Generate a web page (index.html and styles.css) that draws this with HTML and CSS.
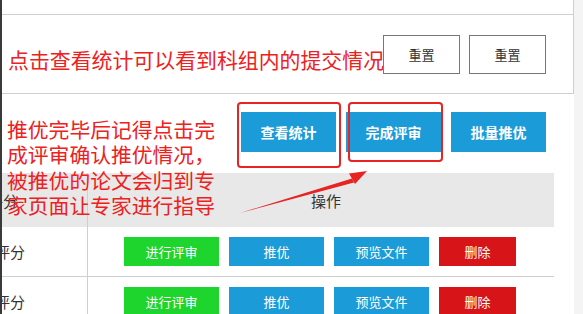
FILE: index.html
```html
<!DOCTYPE html>
<html lang="zh-CN">
<head>
    <meta charset="UTF-8">
    <title>评审管理</title>
    <link rel="stylesheet" href="styles.css">
</head>
<body>
    <div class="page">
        <div class="main">
            <div class="top-box"></div>
            <div class="search-panel">
                <button class="btn-plain">重置</button>
                <button class="btn-plain">重置</button>
            </div>
            <div class="toolbar">
                <button class="btn-blue btn-big">查看统计</button>
                <button class="btn-blue btn-big">完成评审</button>
                <button class="btn-blue btn-big">批量推优</button>
            </div>
            <div class="table">
                <div class="row head">
                    <div class="cell first"><span class="cut-head">评分</span></div>
                    <div class="cell ops">操作</div>
                </div>
                <div class="row">
                    <div class="cell first"><span class="cut">评分</span></div>
                    <div class="cell actions">
                        <button class="btn btn-green">进行评审</button>
                        <button class="btn btn-blue">推优</button>
                        <button class="btn btn-blue">预览文件</button>
                        <button class="btn btn-red">删除</button>
                    </div>
                </div>
                <div class="row">
                    <div class="cell first"><span class="cut">评分</span></div>
                    <div class="cell actions">
                        <button class="btn btn-green">进行评审</button>
                        <button class="btn btn-blue">推优</button>
                        <button class="btn btn-blue">预览文件</button>
                        <button class="btn btn-red">删除</button>
                    </div>
                </div>
            </div>
        </div>
        <div class="side"></div>

        <!-- annotations drawn over the screenshot -->
        <div class="note note-top">点击查看统计可以看到科组内的提交情况</div>
        <div class="note note-left">推优完毕后记得点击完<br>成评审确认推优情况，<br>被推优的论文会归到专<br>家页面让专家进行指导</div>
        <div class="mark mark-1"></div>
        <div class="mark mark-2"></div>
        <svg class="arrow" width="583" height="314" viewBox="0 0 583 314">
            <polygon points="240,213 352,178.5 354,182.5" fill="#e82323"/>
            <polygon points="367,171 349,173.5 355,184" fill="#e82323"/>
        </svg>
    </div>
</body>
</html>
```

FILE: styles.css
```css
* {
    margin: 0;
    padding: 0;
    box-sizing: border-box;
}

body {
    width: 583px;
    height: 314px;
    overflow: hidden;
    background: #fff;
    font-family: "Microsoft YaHei", "Noto Sans CJK SC", sans-serif;
    color: #333;
}

.page {
    position: relative;
    display: flex;
    height: 314px;
    border-left: 2px solid #3a3a3a;
}

.main {
    width: 572px;
}

.side {
    flex: 1;
    background: #f4f4f4;
}

.top-box {
    height: 15px;
    border-right: 1px solid #cfcfcf;
    border-bottom: 1px solid #cfcfcf;
}

.search-panel {
    height: 79px;
    display: flex;
    justify-content: flex-end;
    align-items: center;
    gap: 9px;
    padding-right: 27px;
    border-right: 1px solid #cfcfcf;
    border-bottom: 1px solid #cfcfcf;
}

button {
    border: none;
    cursor: pointer;
    font-family: inherit;
}

.btn-plain {
    width: 77px;
    height: 39px;
    background: #fff;
    border: 1px solid #777;
    font-size: 13px;
    color: #333;
}

.toolbar {
    height: 79px;
    display: flex;
    justify-content: flex-end;
    align-items: flex-start;
    gap: 10px;
    padding-top: 18px;
    padding-right: 28px;
}

.btn-big {
    width: 95px;
    height: 40px;
    font-size: 14px;
    font-weight: bold;
}

.table {
    width: 552px;
}

.row {
    display: flex;
    height: 50px;
    border-bottom: 1px solid #cfcfcf;
}

.row.head {
    height: 54px;
    background: #e8e8e8;
    border-bottom: none;
}

.cell {
    display: flex;
    align-items: center;
    font-size: 15px;
}

.cell.first {
    width: 86px;
    overflow: hidden;
    border-right: 1px solid #cfcfcf;
}

.cut {
    margin-left: -7px;
}

.cut-head {
    margin-left: -14px;
}

.cell.ops {
    flex: 1;
    justify-content: center;
    padding-left: 10px;
}

.cell.actions {
    flex: 1;
    gap: 10px;
    padding-left: 36px;
}

.btn {
    width: 95px;
    height: 29px;
    font-size: 13px;
}

.btn-blue {
    background: #1b9bd7;
    color: #fff;
}

.btn-green {
    background: #1dd52d;
    color: #fff;
}

.btn-red {
    width: 77px;
    background: #d71519;
    color: #fff;
}

.note {
    position: absolute;
    color: #ee2020;
    white-space: nowrap;
}

.note-top {
    left: 6px;
    top: 45px;
    font-size: 20.9px;
    line-height: 28px;
}

.note-left {
    left: 5px;
    top: 117px;
    font-size: 20.8px;
    line-height: 25.3px;
}

.mark {
    position: absolute;
    border: 2px solid #e82323;
    border-radius: 4px;
}

.mark-1 {
    left: 235px;
    top: 102px;
    width: 104px;
    height: 66px;
}

.mark-2 {
    left: 346px;
    top: 102px;
    width: 95px;
    height: 60px;
}

.arrow {
    position: absolute;
    left: -2px;
    top: 0;
}
```
